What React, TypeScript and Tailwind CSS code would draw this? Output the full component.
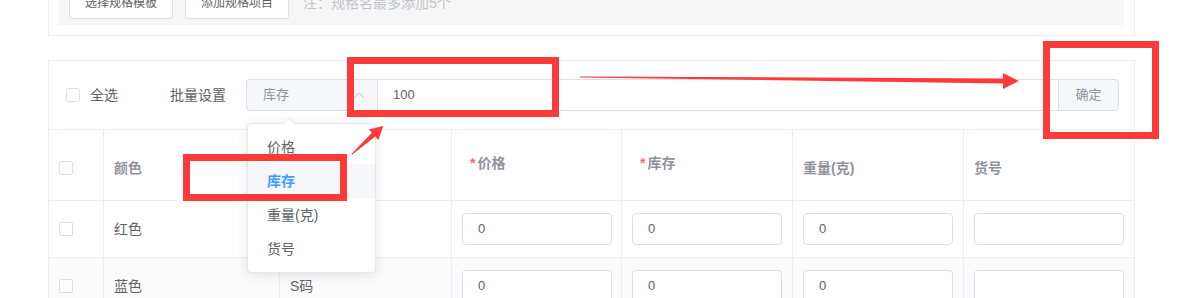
import React from "react";

function Checkbox() {
  return <span className="inline-block w-[14px] h-[14px] border border-[#dcdfe6] rounded-[2px] bg-white shrink-0" />;
}

const cellBase = "flex items-center pl-[10px] border-r border-[#ebeef5]";

function PlainHead({ children }: { children: React.ReactNode }) {
  return <span className="pt-[7px] text-[14px] font-bold text-[#909399]">{children}</span>;
}

function StarHead({ children }: { children: React.ReactNode }) {
  return (
    <span className="pb-[3px] ml-[8px] text-[14px] font-bold text-[#909399]">
      <span className="text-[#f56c6c] mr-[2px]">*</span>
      {children}
    </span>
  );
}

function Inp({ value }: { value: string }) {
  return (
    <div className="w-[150px] h-[32px] border border-[#dcdfe6] rounded-[4px] bg-white flex items-center pl-[15px] text-[13px] text-[#606266]">
      {value}
    </div>
  );
}

function Row({ color, size, bg }: { color: string; size: string; bg: string }) {
  return (
    <div className={`grid grid-cols-[55px_176px_172px_170px_171px_171px_170px] h-[57px] border-b border-[#ebeef5] ${bg}`}>
      <div className={cellBase}>
        <Checkbox />
      </div>
      <div className={`${cellBase} text-[14px] text-[#606266]`}>{color}</div>
      <div className={`${cellBase} text-[14px] text-[#606266]`}>{size}</div>
      <div className={cellBase}>
        <Inp value="0" />
      </div>
      <div className={cellBase}>
        <Inp value="0" />
      </div>
      <div className={cellBase}>
        <Inp value="0" />
      </div>
      <div className="flex items-center pl-[10px]">
        <Inp value="" />
      </div>
    </div>
  );
}

export default function App() {
  return (
    <div className="relative w-[1201px] h-[298px] overflow-hidden bg-white font-['Liberation_Sans','Noto_Sans_CJK_SC',sans-serif]">
      {/* top card */}
      <div className="ml-[48px] w-[1087px] border-x border-b border-[#ebeef5] px-[10px] pb-[10px] flex flex-col">
        <div className="h-[25px] bg-[#f6f6f6] px-[10px] flex items-start">
          <div className="-mt-[13px] flex items-center">
            <div className="h-[32px] px-[15px] flex items-center border border-[#dcdfe6] rounded-[3px] bg-white text-[12px] text-[#606266]">
              选择规格模板
            </div>
            <div className="ml-[12px] h-[32px] px-[15px] flex items-center border border-[#dcdfe6] rounded-[3px] bg-white text-[12px] text-[#606266]">
              添加规格项目
            </div>
            <span className="ml-[14px] text-[14px] text-[#c0c4cc]">注：规格名最多添加5个</span>
          </div>
        </div>
      </div>

      {/* second card */}
      <div className="mt-[24px] ml-[48px] w-[1087px] border border-[#ebeef5]">
        <div className="h-[69px] border-b border-[#ebeef5] flex items-center pl-[17px]">
          <Checkbox />
          <span className="ml-[10px] text-[14px] text-[#606266]">全选</span>
          <span className="ml-[52px] text-[14px] text-[#606266]">批量设置</span>
          <div className="ml-[20px] flex h-[32px]">
            <div className="w-[132px] border border-[#dcdfe6] rounded-l-[4px] bg-[#f5f7fa] flex items-center justify-between pl-[16px] pr-[13px]">
              <span className="text-[13px] text-[#909399]">库存</span>
              <svg width="10" height="6" viewBox="0 0 10 6">
                <polyline points="0.5,5.5 5,1 9.5,5.5" fill="none" stroke="#c0c4cc" strokeWidth="1" />
              </svg>
            </div>
            <div className="w-[680px] border-y border-[#dcdfe6] bg-white flex items-center pl-[15px] text-[13px] text-[#606266]">
              100
            </div>
            <div className="w-[61px] border border-[#dcdfe6] rounded-r-[4px] bg-[#f5f7fa] flex items-center justify-center text-[13px] text-[#909399]">
              确定
            </div>
          </div>
        </div>

        {/* table header */}
        <div className="grid grid-cols-[55px_176px_172px_170px_171px_171px_170px] h-[71px] border-b border-[#ebeef5]">
          <div className={cellBase}>
            <span className="pt-[5px] flex">
              <Checkbox />
            </span>
          </div>
          <div className={cellBase}>
            <PlainHead>颜色</PlainHead>
          </div>
          <div className={cellBase}>
            <PlainHead>尺寸</PlainHead>
          </div>
          <div className={cellBase}>
            <StarHead>价格</StarHead>
          </div>
          <div className={cellBase}>
            <StarHead>库存</StarHead>
          </div>
          <div className={cellBase}>
            <PlainHead>重量(克)</PlainHead>
          </div>
          <div className="flex items-center pl-[10px]">
            <PlainHead>货号</PlainHead>
          </div>
        </div>
        <Row color="红色" size="S码" bg="bg-white" />
        <Row color="蓝色" size="S码" bg="bg-[#fafafa]" />
      </div>

      {/* dropdown */}
      <div className="absolute left-[247px] top-[123px] w-[129px] border border-[#e4e7ed] rounded-[4px] bg-white shadow-[0_2px_12px_0_rgba(0,0,0,0.1)] py-[6px]">
        <svg className="absolute -top-[7px] left-[34px]" width="14" height="8" viewBox="0 0 14 8">
          <polygon points="0,8 7,1 14,8" fill="white" />
          <polyline points="0.5,7.5 7,1 13.5,7.5" fill="none" stroke="#e4e7ed" strokeWidth="1" />
        </svg>
        <div className="h-[34px] flex items-center pl-[19px] text-[14px] text-[#606266]">价格</div>
        <div className="h-[34px] flex items-center pl-[19px] text-[14px] font-bold text-[#409eff] bg-[#f5f7fa]">库存</div>
        <div className="h-[34px] flex items-center pl-[19px] text-[14px] text-[#606266]">重量(克)</div>
        <div className="h-[34px] flex items-center pl-[19px] text-[14px] text-[#606266]">货号</div>
      </div>

      {/* annotations */}
      <div className="absolute left-[347px] top-[57px] w-[212px] h-[60px] border-[7px] border-[#fd3a3a]" />
      <div className="absolute left-[1043px] top-[41px] w-[116px] h-[98px] border-[7px] border-[#fd3a3a]" />
      <div className="absolute left-[183px] top-[154px] w-[164px] h-[47px] border-[7px] border-[#fd3a3a]" />
      <svg className="absolute left-0 top-0 pointer-events-none" width="1201" height="298" viewBox="0 0 1201 298">
        <polygon
          points="580,76.5 1003,78.5 1003,73 1019,81 1003,89 1003,83.5 580,77.5"
          fill="#fd3a3a"
        />
        <polygon
          points="351.4,153.9 371.9,132.8 368.9,129.5 383.3,126 378.3,139.9 375.3,136.6 352,154.7"
          fill="#fd3a3a"
        />
      </svg>
    </div>
  );
}
